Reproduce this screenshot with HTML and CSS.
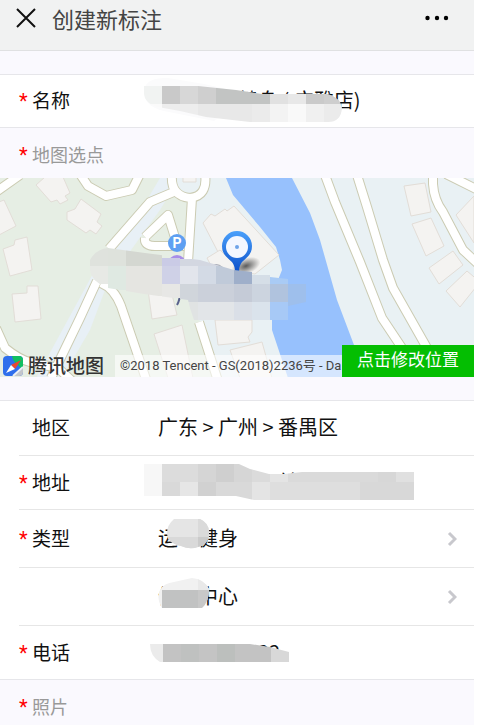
FILE: index.html
```html
<!DOCTYPE html>
<html lang="zh-CN">
<head>
    <meta charset="UTF-8">
    <meta name="viewport" content="width=device-width, initial-scale=1.0">
    <title>创建新标注</title>
    <link rel="stylesheet" href="styles.css">
</head>
<body>

<header class="topbar">
    <button type="button" class="icon-btn" aria-label="关闭">
        <svg width="20" height="20" viewBox="0 0 20 20"><path d="M1 1l18 18M19 1l-18 18" stroke="#111" stroke-width="2" fill="none"/></svg>
    </button>
    <h1>创建新标注</h1>
    <button type="button" class="icon-btn" aria-label="更多">
        <svg width="24" height="6" viewBox="0 0 24 6"><circle cx="2.5" cy="3" r="2.2"/><circle cx="12" cy="3" r="2.2"/><circle cx="21" cy="3" r="2.2"/></svg>
    </button>
</header>

<form>
    <div class="group">
        <div class="row">
            <label class="required" for="nombre">名称</label>
            <div class="value">
                <input type="text" id="nombre" value="　　　　健身 ( 广雅店)">
                <svg class="mask mask-name" width="200" height="42" viewBox="0 0 200 42">
                    <clipPath id="c1"><path d="M0 5H54L92 9 118 13H184Q197 17 198 27 197 41 184 41H106L62 36 36 30 14 26Q0 22 0 12Z"/></clipPath>
                    <path d="M0 8Q4-4 24-3L60 3 100 12 70 40 20 30Q0 26 0 8Z" fill="#fbfbfc"/>
                    <g clip-path="url(#c1)">
                        <path d="M0 5h18v18H0z" fill="#f1f3f2"/><path d="M18 5h18v18H18z" fill="#c9c9c9"/><path d="M36 5h18v18H36z" fill="#d7d7d7"/><path d="M54 5h18v18H54z" fill="#cfcfcf"/><path d="M72 5h54v18H72z" fill="#c2c4c3"/><path d="M126 5h18v18h-18z" fill="#e1e1e1"/><path d="M144 5h18v18h-18z" fill="#e8e8e8"/><path d="M162 5h18v18h-18z" fill="#cacaca"/><path d="M180 5h20v18h-20z" fill="#cecece"/>
                        <path d="M0 23h18v18H0z" fill="#fafafa"/><path d="M18 23h36v18H18z" fill="#ededed"/><path d="M54 23h54v18H54z" fill="#e8e8e8"/><path d="M108 23h18v18h-18z" fill="#ebebeb"/><path d="M126 23h18v18h-18z" fill="#f3f3f3"/><path d="M144 23h18v18h-18z" fill="#f9f9f9"/><path d="M162 23h18v18h-18z" fill="#f0f0f0"/><path d="M180 23h20v18h-20z" fill="#ebebeb"/>
                    </g>
                </svg>
            </div>
        </div>
    </div>

    <h2 class="section required">地图选点</h2>

    <div class="map">
        <svg class="map-canvas" viewBox="0 0 474 199" preserveAspectRatio="xMidYMid slice">
            <rect width="474" height="200" fill="#e9f1f4"/>
            <path d="M0 0H160L188 22V84L200 145 222 200H0Z" fill="#e6eee4"/>
            <path d="M160 0L135 42 95 92 46 182 36 200H62L90 152 108 104 160 32 172 12V0Z" fill="#e8f0f6"/>
            <!-- río -->
            <path d="M226 0L233 17 260 49 276 69 280 82 282 92 278 102 272 125V152L288 200H367L354 167 337 122 320 62 310 35 292 0Z" fill="#97c1fd"/>
            <g fill="#f4f3f1" stroke="#e2ddd7">
                <path d="M45 -1H63L70 15 65 18 68 22 60 26 57 22 51 24 36 7Z"/>
                <path d="M67 34L75 31 81 21 101 36 97 44 102 48 96 56 90 52 86 55 67 42Z"/>
                <path d="M-1 24L4 22 16 48-1 57Z"/>
                <path d="M3 71L14 67 15 62 27 59 32 92 10 98Z"/>
                <path d="M12 116L27 115V108H38L41 141 15 144Z"/>
                <path d="M148 112L152 141 177 137 170 108Z"/>
                <path d="M154 156L182 147 193 200H168Z"/>
                <path d="M183 -1V4H196V-1Z"/>
                <path d="M203 45L211 36 215 38 225 31 227 33 234 28 279 77 255 96 240 94 225 72 218 74Z"/>
                <path d="M207 80L220 72 240 92 230 102 215 95Z"/>
                <path d="M215 142H252V154L248 159 250 164 218 167Z"/>
                <path d="M230 172L262 164 272 200H240Z"/>
                <path d="M404 8L425 5 431 34 411 38Z"/>
                <path d="M412 46L431 40 444 68 426 78Z"/>
                <path d="M429 90L453 73 463 87 439 106Z"/>
                <path d="M446 113L467 93 480 104 460 129Z"/>
                <path d="M456 37L474 18V65Z"/>
            </g>
            <g fill="none" stroke="#cbcbb2" stroke-width="10" stroke-linejoin="round">
                <path d="M-4 14L20 -3M80 -4L88 8 106 18 132 12 140 -4"/>
                <path d="M176 13L150 24 109 71M97 103L80 140 51 200M101 105Q114 110 121 128L147 204"/>
                <path d="M-4 150L5 170Q20 182 30 184L58 190 72 203"/>
                <path d="M172 -4Q170 18 190 20 208 18 205 -4M192 20L188 84M145 59L168 37 177 66M145 60Q144 68 155 68H184"/>
                <path d="M199 144L218 203M325 -3L335 24 360 84 382 140 402 170 428 204M357 -3L367 29 383 82 393 110 427 170"/>
                <path d="M433 -4V6Q434 22 443 34L463 72 478 86M446 -4L478 12"/>
            </g>
            <g fill="none" stroke="#fff" stroke-width="8" stroke-linejoin="round">
                <path d="M-4 14L20 -3M80 -4L88 8 106 18 132 12 140 -4"/>
                <path d="M176 13L150 24 109 71M97 103L80 140 51 200M101 105Q114 110 121 128L147 204"/>
                <path d="M-4 150L5 170Q20 182 30 184L58 190 72 203"/>
                <path d="M172 -4Q170 18 190 20 208 18 205 -4M192 20L188 84M145 59L168 37 177 66M145 60Q144 68 155 68H184"/>
                <path d="M199 144L218 203M325 -3L335 24 360 84 382 140 402 170 428 204M357 -3L367 29 383 82 393 110 427 170"/>
                <path d="M433 -4V6Q434 22 443 34L463 72 478 86M446 -4L478 12"/>
            </g>
            <circle cx="177" cy="65" r="9" fill="#5e9ff2"/>
            <text class="parking" x="177" y="70" text-anchor="middle">P</text>
            <circle cx="177" cy="86" r="9" fill="#a78ee8"/>
            <circle cx="216" cy="95" r="9" fill="#a4a7b2"/>
            <path d="M180 114Q180 122 177 127" stroke="#5a628c" fill="none" stroke-width="2"/>
            <!-- marcador -->
            <defs>
                <linearGradient id="pin" x2="0" y2="1"><stop offset="0" stop-color="#4aa0fb"/><stop offset="1" stop-color="#0a4fca"/></linearGradient>
                <radialGradient id="sombra"><stop offset="0" stop-color="#333" stop-opacity=".8"/><stop offset="1" stop-color="#333" stop-opacity="0"/></radialGradient>
            </defs>
            <ellipse cx="246" cy="88" rx="15" ry="8" fill="url(#sombra)" transform="rotate(-20 246 88)"/>
            <path d="M237 53a15 15 0 0 1 15 15c0 9-6 12-10 16q-3 4-3 10h-4q0-6-3-10c-4-4-10-7-10-16a15 15 0 0 1 15-15z" fill="url(#pin)"/>
            <circle cx="237" cy="69" r="11" fill="#f3f7ff"/>
            <circle cx="237" cy="69" r="2" fill="#6ea3e8"/>
            <clipPath id="c2"><path d="M90 82Q96 71 108 70L145 75 200 82 234 92 252 94V97H270V99L288 101V106H306V124L288 128V142H194L190 130 188 122 144 116 108 110Q92 104 90 92Z"/></clipPath>
            <g clip-path="url(#c2)">
                <path d="M88 68h20v20H88z" fill="#dfe2dd"/><path d="M108 68h18v20h-18z" fill="#dee2dc"/><path d="M126 68h36v20h-36z" fill="#d4d7d1"/><path d="M162 80h18v8h-18z" fill="#cacbe6"/><path d="M180 81h54v7h-54z" fill="#d3d7e1"/>
                <path d="M88 88h20v18H88z" fill="#e7e9e5"/><path d="M108 88h18v24h-18z" fill="#dfe9e2"/><path d="M126 88h36v30h-36z" fill="#e5e5e1"/><path d="M162 88h18v18h-18z" fill="#cfd1e7"/><path d="M180 88h18v18h-18z" fill="#e2e5ec"/><path d="M198 88h18v18h-18z" fill="#d3dae5"/><path d="M216 88h18v18h-18z" fill="#c0cad9"/><path d="M234 88h18v18h-18z" fill="#9fafca"/><path d="M252 94h18v12h-18z" fill="#d5dee7"/><path d="M270 94h18v12h-18z" fill="#a9cbf5"/>
                <path d="M162 106h18v14h-18z" fill="#e7e7e5"/><path d="M180 106h18v18h-18z" fill="#d0d5db"/><path d="M198 106h36v18h-36z" fill="#cbd0da"/><path d="M234 106h18v18h-18z" fill="#c5cbd7"/><path d="M252 106h18v18h-18z" fill="#ccd4df"/><path d="M270 106h18v18h-18z" fill="#b0c3de"/><path d="M288 106h18v22h-18z" fill="#9ebfec"/>
                <path d="M180 124h18v18h-18z" fill="#e0e3e3"/><path d="M198 124h36v18h-36z" fill="#e2e5e8"/><path d="M234 124h18v18h-18z" fill="#dadfe7"/><path d="M252 124h18v18h-18z" fill="#dae3ec"/><path d="M270 124h18v18h-18z" fill="#a7c9f6"/>
            </g>
        </svg>
        <div class="map-bar">
            <svg width="22" height="22" viewBox="0 0 22 22">
                <path d="M5 1h12q4 0 4 4v12q0 4-4 4H5q-4 0-4-4V5q0-4 4-4z" fill="#2f6fec"/>
                <path d="M10 1h7q4 0 4 4v9q-3-1-5-4Q11 7 10 1Z" fill="#12bf61"/>
                <path d="M21 13v4q0 4-4 4h-5Z" fill="#c3c6cb"/>
                <path d="M11 21l10-9" stroke="#eef1f2" stroke-width="2"/>
                <path d="M19 5L13 14 9 10Z" fill="#ec4630"/>
                <path d="M9 10L13 14 4 18Z" fill="#fff"/>
            </svg>
            <span class="map-brand">腾讯地图</span>
            <span class="map-copy">©2018 Tencent - GS(2018)2236号 - Da</span>
            <button type="button" class="map-btn">点击修改位置</button>
        </div>
    </div>

    <div class="group">
        <div class="row">
            <span class="label">地区</span>
            <div class="value">广东 &gt; 广州 &gt; 番禺区</div>
        </div>
        <div class="row">
            <label class="required" for="direccion">地址</label>
            <div class="value">
                <input type="text" id="direccion" value="　　　　　　兰">
                <svg class="mask mask-address" width="270" height="36" viewBox="0 0 270 36">
                    <clipPath id="c3"><path d="M0 0H95L106 5 125 10H140L158 8H270V36H110L92 32H0Z"/></clipPath>
                    <g clip-path="url(#c3)">
                        <path d="M0 0h18v36H0z" fill="#f7f7f7"/><path d="M18 0h36v18H18z" fill="#dcdcdc"/><path d="M54 0h18v18H54z" fill="#d5d5d5"/><path d="M72 0h18v18H72z" fill="#cfcfcf"/><path d="M90 0h18v18H90z" fill="#d6d6d6"/><path d="M108 0h18v18h-18z" fill="#dbdbdb"/><path d="M126 0h18v18h-18z" fill="#e4e4e4"/><path d="M144 0h90v18h-90z" fill="#dadada"/><path d="M234 0h18v18h-18z" fill="#d7d7d7"/><path d="M252 0h18v18h-18z" fill="#e0e0e0"/>
                        <path d="M18 18h18v18H18z" fill="#d9d9d9"/><path d="M36 18h18v18H36z" fill="#e6e6e6"/><path d="M54 18h18v18H54z" fill="#d1d1d1"/><path d="M72 18h36v18H72z" fill="#d9d9d9"/><path d="M108 18h18v18h-18z" fill="#e4e4e4"/><path d="M126 18h90v18h-90z" fill="#dedede"/><path d="M216 18h54v18h-54z" fill="#d8d8d8"/>
                    </g>
                </svg>
            </div>
        </div>
        <div class="row tall">
            <label class="required" for="tipo">类型</label>
            <div class="value">
                <select id="tipo"><option>运动健身</option></select>
                <svg class="mask mask-type" width="44" height="32" viewBox="0 0 44 32">
                    <clipPath id="c4"><path d="M8 2H34Q43 6 43 15 43 28 32 30 24 33 15 29 1 26 1 16 1 8 8 2Z"/></clipPath>
                    <g clip-path="url(#c4)"><path d="M0 0h44v32H0z" fill="#e5e5e5"/><path d="M32 0h12v20H32z" fill="#dadada"/><path d="M0 20h32v12H0z" fill="#d9d9d9"/><path d="M32 20h12v12H32z" fill="#cacaca"/></g>
                </svg>
            </div>
            <svg class="arrow" width="10" height="16" viewBox="0 0 10 16"><path d="M2 2l6 6-6 6"/></svg>
        </div>
        <div class="row tall">
            <span class="label"></span>
            <div class="value">
                <select id="subtipo" aria-label="类型"><option>健身中心</option></select>
                <svg class="mask mask-subtype" width="52" height="32" viewBox="0 0 52 32">
                    <clipPath id="c5"><path d="M2 12Q6 5 16 4L34 0Q46 1 51 11 51 24 44 30H4Q-2 20 2 12Z"/></clipPath>
                    <g clip-path="url(#c5)"><path d="M0 0h52v32H0z" fill="#f1f1f1"/><path d="M40 0h12v12H40z" fill="#e9e9e9"/><path d="M4 12h36v18H4z" fill="#c1c2c2"/><path d="M40 12h12v18H40z" fill="#c8c8c8"/></g>
                </svg>
            </div>
            <svg class="arrow" width="10" height="16" viewBox="0 0 10 16"><path d="M2 2l6 6-6 6"/></svg>
        </div>
        <div class="row">
            <label class="required" for="telefono">电话</label>
            <div class="value">
                <input type="tel" id="telefono" value="&#8199;&#8199;&#8199;&#8199;&#8199;&#8199;&#8199;&#8199;&#8199;22">
                <svg class="mask mask-phone" width="140" height="18" viewBox="0 0 140 18">
                    <clipPath id="c6"><path d="M0 0H100L120 3 139 8V18H10Q0 12 0 0Z"/></clipPath>
                    <g clip-path="url(#c6)"><path d="M0 0h13v18H0z" fill="#ebebeb"/><path d="M13 0h18v18H13z" fill="#c3c3c3"/><path d="M31 0h18v18H31z" fill="#bfc1c0"/><path d="M49 0h18v18H49z" fill="#c4c4c4"/><path d="M67 0h18v18H67z" fill="#bcbfbd"/><path d="M85 0h36v18H85z" fill="#c3c3c3"/><path d="M121 0h19v18h-19z" fill="#d8d8d8"/></g>
                </svg>
            </div>
        </div>
    </div>

    <h2 class="section required">照片</h2>
</form>

</body>
</html>
```
FILE: styles.css
```css
* {
    box-sizing: border-box;
}
html {
    background-color: #fff;
}
body {
    margin: 0 3px 0 0;
    min-height: 100vh;
    overflow-x: hidden;
    background-color: #faf9fe;
    font-family: "Noto Sans CJK SC", sans-serif;
    font-size: 19px;
    line-height: 28px;
    color: #111;
}
.topbar {
    display: flex;
    align-items: center;
    height: 51px;
    padding: 0 25px 14px 16px;
    background-color: #f1f2f2;
    border-bottom: 1px solid #e0e1e2;
}
h1 {
    flex: 1;
    margin: 0 0 0 16px;
    font-size: 22px;
    font-weight: 400;
    color: #444;
}
.icon-btn {
    display: flex;
    padding: 0;
    background: none;
    border: none;
    cursor: pointer;
}
.group {
    margin-top: 23px;
    background-color: #fff;
    border-top: 1px solid #e6e6ea;
    border-bottom: 1px solid #e6e6ea;
}
.row {
    display: flex;
    align-items: center;
    height: 54px;
    margin-left: 19px;
    padding-right: 17px;
}
.row + .row {
    border-top: 1px solid #e6e6e6;
}
.row:only-child {
    height: 52px;
}
.row.tall {
    height: 58px;
}
.row label, .row .label {
    width: 139px;
    margin-bottom: 2px;
    padding-left: 13px;
}
.row label.required {
    padding-left: 0;
}
.required::before {
    content: "*";
    display: inline-block;
    width: 13px;
    font-family: Roboto, sans-serif;
    font-size: 20px;
    line-height: 20px;
    color: #f00;
}
.value {
    position: relative;
    flex: 1;
    display: flex;
    min-width: 0;
    margin-bottom: 2px;
    font-size: 20px;
}
input, select {
    display: block;
    width: 100%;
    height: 28px;
    margin: 0;
    padding: 0;
    border: none;
    outline: none;
    background: none;
    appearance: none;
    font: inherit;
    color: inherit;
}
.mask {
    position: absolute;
    overflow: visible;
    pointer-events: none;
}
.mask-name {
    left: -14px;
    top: -5px;
}
.mask-address {
    left: -14px;
    top: -4px;
}
.mask-type {
    left: 8px;
    top: -7px;
}
.mask-subtype {
    left: 0;
    top: -4px;
}
.mask-phone {
    left: -8px;
    top: 6px;
}
.arrow {
    fill: none;
    stroke: #c8c8cd;
    stroke-width: 3;
}
.section {
    margin: 0;
    padding: 12px 19px 10px;
    font-size: 18px;
    font-weight: 400;
    color: #999;
}
.map {
    position: relative;
    height: 199px;
    overflow: hidden;
}
.map-canvas {
    display: block;
    width: 100%;
    height: 100%;
}
.parking {
    font: bold 14px Roboto, sans-serif;
    fill: #fff;
}
.map-bar {
    position: absolute;
    left: 0;
    right: 0;
    bottom: 0;
    display: flex;
    align-items: flex-end;
    padding-left: 2px;
}
.map-brand {
    margin: 0 11px 0 4px;
    font-size: 19px;
    line-height: 24px;
    font-weight: 500;
    color: #333;
}
.map-copy {
    flex: 1;
    min-width: 0;
    padding-left: 5px;
    overflow: hidden;
    white-space: nowrap;
    background-color: rgba(255, 255, 255, 0.6);
    font-family: Roboto, "Noto Sans CJK SC", sans-serif;
    font-size: 13px;
    line-height: 22px;
    color: #444;
}
.map-btn {
    width: 132px;
    height: 32px;
    padding: 0 0 4px;
    border: none;
    background-color: #04be02;
    font: inherit;
    font-size: 17px;
    color: #fff;
    cursor: pointer;
}
```
